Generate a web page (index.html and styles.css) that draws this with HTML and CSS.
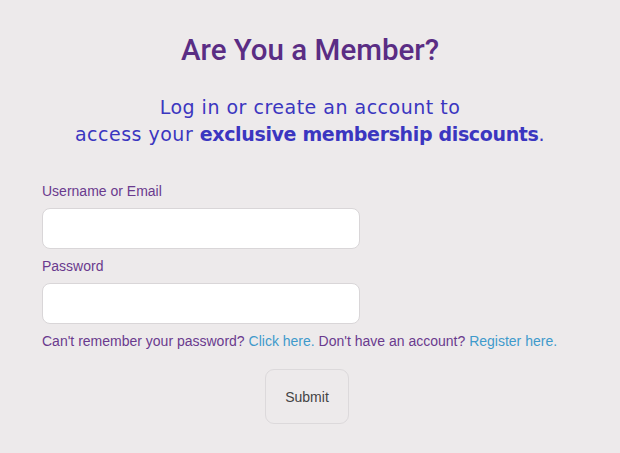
FILE: index.html
```html
<!DOCTYPE html>
<html lang="en">
<head>
    <meta charset="UTF-8">
    <title>Are You a Member?</title>
    <link rel="stylesheet" href="styles.css">
</head>
<body>
    <div class="member">
        <h1 class="member-title">Are You a Member?</h1>
        <p class="member-intro">Log in or create an account to<br>access your <strong>exclusive membership discounts</strong>.</p>

        <form class="login-form">
            <label class="field-label" for="username">Username or Email</label>
            <input class="field-input" type="text" id="username">
            <label class="field-label" for="password">Password</label>
            <input class="field-input" type="password" id="password">
            <p class="help-text">Can't remember your password? <a href="#">Click here.</a> Don't have an account? <a href="#">Register here.</a></p>
            <div class="submit-row">
                <button class="submit-btn" type="button">Submit</button>
            </div>
        </form>
    </div>
</body>
</html>
```
FILE: styles.css
```css
body {
    margin: 0;
    background-color: #edeaeb;
    font-family: 'Liberation Sans', Arial, sans-serif;
}

.member {
    padding: 32px 42px 0;
}

.member-title {
    margin: 0;
    text-align: center;
    font-family: Roboto, sans-serif;
    font-weight: 500;
    font-size: 29.5px;
    line-height: 36px;
    color: #5a2d84;
}

.member-intro {
    margin: 26px 0 0;
    text-align: center;
    font-family: 'DejaVu Sans', sans-serif;
    font-size: 19px;
    line-height: 27px;
    letter-spacing: 0.5px;
    color: #3b36c0;
}

.member-intro strong {
    font-weight: bold;
    letter-spacing: -0.35px;
}

.login-form {
    margin-top: 35px;
}

.field-label {
    display: block;
    font-size: 14px;
    line-height: 16px;
    color: #6a3a8e;
}

.field-input {
    display: block;
    box-sizing: border-box;
    width: 318px;
    height: 41px;
    margin: 9px 0 9px;
    border: 1px solid #d9d6d8;
    border-radius: 8px;
    background: #fff;
}

.help-text {
    margin: 9px 0 0;
    font-size: 14px;
    line-height: 16px;
    color: #6a3a8e;
}

.help-text a {
    color: #3f9acb;
    text-decoration: none;
}

.submit-row {
    display: flex;
    justify-content: center;
    margin-top: 20px;
    padding-right: 6px;
}

.submit-btn {
    width: 84px;
    height: 55px;
    border: 1px solid #dcd9db;
    border-radius: 9px;
    background: #edeaeb;
    font-family: 'Liberation Sans', Arial, sans-serif;
    font-size: 14px;
    color: #444;
}
```
